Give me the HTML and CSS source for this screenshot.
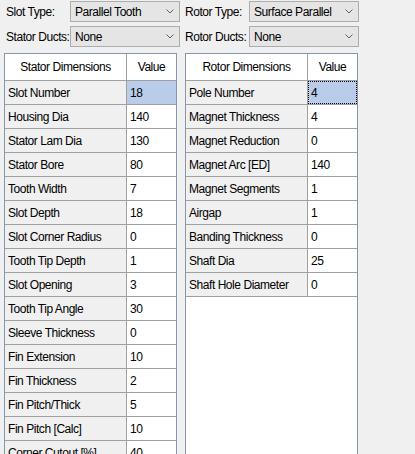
FILE: index.html
```html
<!DOCTYPE html>
<html lang="en">
<head>
    <meta charset="UTF-8">
    <title>Motor Geometry</title>
    <link rel="stylesheet" href="styles.css">
</head>
<body>
    <div class="settings">
        <div class="field-row">
            <div class="field">
                <span class="field-label">Slot Type:</span>
                <div class="combo"><span>Parallel Tooth</span><svg class="chevron" width="8" height="5" viewBox="0 0 8 5"><path d="M0.5 0.5 L4 4 L7.5 0.5" fill="none" stroke="#606060" stroke-width="1"/></svg></div>
            </div>
            <div class="field">
                <span class="field-label">Rotor Type:</span>
                <div class="combo"><span>Surface Parallel</span><svg class="chevron" width="8" height="5" viewBox="0 0 8 5"><path d="M0.5 0.5 L4 4 L7.5 0.5" fill="none" stroke="#606060" stroke-width="1"/></svg></div>
            </div>
        </div>
        <div class="field-row">
            <div class="field">
                <span class="field-label">Stator Ducts:</span>
                <div class="combo"><span>None</span><svg class="chevron" width="8" height="5" viewBox="0 0 8 5"><path d="M0.5 0.5 L4 4 L7.5 0.5" fill="none" stroke="#606060" stroke-width="1"/></svg></div>
            </div>
            <div class="field">
                <span class="field-label">Rotor Ducts:</span>
                <div class="combo"><span>None</span><svg class="chevron" width="8" height="5" viewBox="0 0 8 5"><path d="M0.5 0.5 L4 4 L7.5 0.5" fill="none" stroke="#606060" stroke-width="1"/></svg></div>
            </div>
        </div>
    </div>

    <div class="grids">
        <div class="grid">
            <div class="grid-head">
                <div class="head-cell">Stator Dimensions</div>
                <div class="head-cell">Value</div>
            </div>
            <div class="grid-row"><div class="name">Slot Number</div><div class="value selected">18</div></div>
            <div class="grid-row"><div class="name">Housing Dia</div><div class="value">140</div></div>
            <div class="grid-row"><div class="name">Stator Lam Dia</div><div class="value">130</div></div>
            <div class="grid-row"><div class="name">Stator Bore</div><div class="value">80</div></div>
            <div class="grid-row"><div class="name">Tooth Width</div><div class="value">7</div></div>
            <div class="grid-row"><div class="name">Slot Depth</div><div class="value">18</div></div>
            <div class="grid-row"><div class="name">Slot Corner Radius</div><div class="value">0</div></div>
            <div class="grid-row"><div class="name">Tooth Tip Depth</div><div class="value">1</div></div>
            <div class="grid-row"><div class="name">Slot Opening</div><div class="value">3</div></div>
            <div class="grid-row"><div class="name">Tooth Tip Angle</div><div class="value">30</div></div>
            <div class="grid-row"><div class="name">Sleeve Thickness</div><div class="value">0</div></div>
            <div class="grid-row"><div class="name">Fin Extension</div><div class="value">10</div></div>
            <div class="grid-row"><div class="name">Fin Thickness</div><div class="value">2</div></div>
            <div class="grid-row"><div class="name">Fin Pitch/Thick</div><div class="value">5</div></div>
            <div class="grid-row"><div class="name">Fin Pitch [Calc]</div><div class="value">10</div></div>
            <div class="grid-row"><div class="name">Corner Cutout [%]</div><div class="value">40</div></div>
        </div>

        <div class="grid">
            <div class="grid-head">
                <div class="head-cell">Rotor Dimensions</div>
                <div class="head-cell">Value</div>
            </div>
            <div class="grid-row"><div class="name">Pole Number</div><div class="value selected focused">4</div></div>
            <div class="grid-row"><div class="name">Magnet Thickness</div><div class="value">4</div></div>
            <div class="grid-row"><div class="name">Magnet Reduction</div><div class="value">0</div></div>
            <div class="grid-row"><div class="name">Magnet Arc [ED]</div><div class="value">140</div></div>
            <div class="grid-row"><div class="name">Magnet Segments</div><div class="value">1</div></div>
            <div class="grid-row"><div class="name">Airgap</div><div class="value">1</div></div>
            <div class="grid-row"><div class="name">Banding Thickness</div><div class="value">0</div></div>
            <div class="grid-row"><div class="name">Shaft Dia</div><div class="value">25</div></div>
            <div class="grid-row"><div class="name">Shaft Hole Diameter</div><div class="value">0</div></div>
        </div>
    </div>
</body>
</html>
```

FILE: styles.css
```css
body {
    margin: 0;
    height: 454px;
    overflow: hidden;
    background-color: #f0f0f0;
    font-family: "Liberation Sans", Arial, sans-serif;
    font-size: 12px;
    letter-spacing: -0.45px;
    color: #000;
}
.settings {
    display: flex;
    flex-direction: column;
    gap: 4px;
    padding: 1px 0 0 6px;
}
.field-row {
    display: flex;
    gap: 5px;
}
.field {
    display: flex;
    align-items: center;
}
.field-label {
    width: 64px;
}
.combo {
    box-sizing: border-box;
    width: 110px;
    height: 21px;
    display: flex;
    align-items: center;
    justify-content: space-between;
    padding: 0 5px 0 4px;
    background-color: #e5e5e5;
    border: 1px solid #adadad;
}
.grids {
    display: flex;
    gap: 8px;
    margin: 6px 0 0 4px;
}
.grid {
    box-sizing: border-box;
    width: 173px;
    height: 420px;
    background-color: #fff;
    border: 1px solid #8497ae;
}
.grid-head,
.grid-row {
    box-sizing: border-box;
    display: grid;
    grid-template-columns: 122px 1fr;
    border-bottom: 1px solid #a0a0a0;
}
.grid-head {
    height: 27px;
}
.grid-row {
    height: 24px;
}
.head-cell {
    display: flex;
    align-items: center;
    justify-content: center;
}
.head-cell:first-child,
.name {
    border-right: 1px solid #a0a0a0;
}
.name {
    display: flex;
    align-items: center;
    padding-left: 3px;
    background-color: #f0f0f0;
}
.value {
    display: flex;
    align-items: center;
    padding-left: 3px;
}
.selected {
    background-color: #b9cdea;
}
.focused {
    outline: 1px dotted #000;
    outline-offset: -1px;
}
```
